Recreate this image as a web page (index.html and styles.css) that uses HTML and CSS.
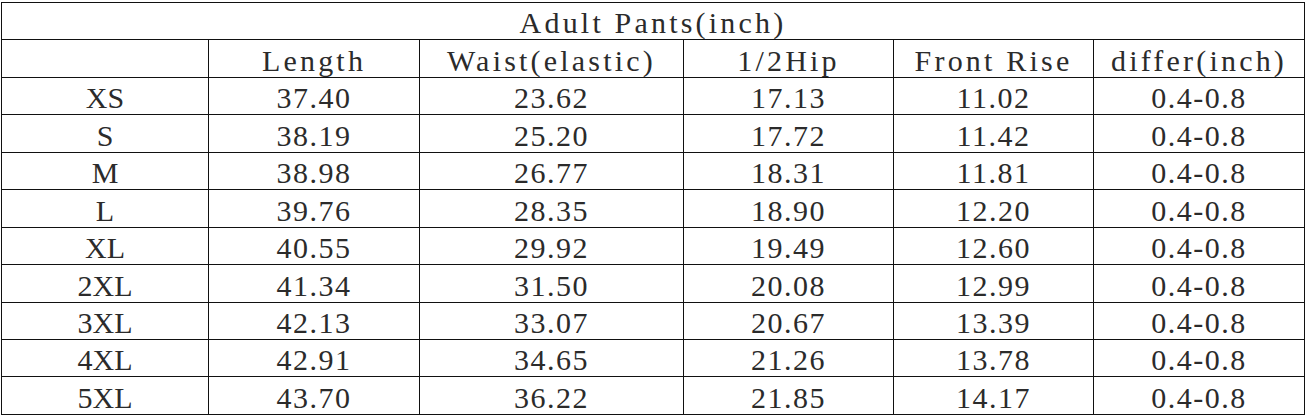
FILE: index.html
```html
<!DOCTYPE html>
<html>
<head>
<meta charset="utf-8">
<link rel="stylesheet" href="styles.css">
</head>
<body>
<table class="sizes">
  <colgroup>
    <col class="c-size"><col class="c-len"><col class="c-waist"><col class="c-hip"><col class="c-rise"><col class="c-diff">
  </colgroup>
  <tr class="head"><td colspan="6">Adult Pants(inch)</td></tr>
  <tr class="head"><td></td><td>Length</td><td>Waist(elastic)</td><td>1/2Hip</td><td>Front Rise</td><td>differ(inch)</td></tr>
  <tr><td>XS</td><td>37.40</td><td>23.62</td><td>17.13</td><td>11.02</td><td>0.4-0.8</td></tr>
  <tr><td>S</td><td>38.19</td><td>25.20</td><td>17.72</td><td>11.42</td><td>0.4-0.8</td></tr>
  <tr><td>M</td><td>38.98</td><td>26.77</td><td>18.31</td><td>11.81</td><td>0.4-0.8</td></tr>
  <tr><td>L</td><td>39.76</td><td>28.35</td><td>18.90</td><td>12.20</td><td>0.4-0.8</td></tr>
  <tr><td>XL</td><td>40.55</td><td>29.92</td><td>19.49</td><td>12.60</td><td>0.4-0.8</td></tr>
  <tr><td>2XL</td><td>41.34</td><td>31.50</td><td>20.08</td><td>12.99</td><td>0.4-0.8</td></tr>
  <tr><td>3XL</td><td>42.13</td><td>33.07</td><td>20.67</td><td>13.39</td><td>0.4-0.8</td></tr>
  <tr><td>4XL</td><td>42.91</td><td>34.65</td><td>21.26</td><td>13.78</td><td>0.4-0.8</td></tr>
  <tr><td>5XL</td><td>43.70</td><td>36.22</td><td>21.85</td><td>14.17</td><td>0.4-0.8</td></tr>
</table>
</body>
</html>
```
FILE: styles.css
```css
html, body {
  margin: 0;
  padding: 0;
  background: #fff;
}
.sizes {
  margin: 2px 0 0 1px;
  border-collapse: collapse;
  table-layout: fixed;
  width: 1303px;
}
.c-size { width: 207px; }
.c-len { width: 211px; }
.c-waist { width: 264px; }
.c-hip { width: 210px; }
.c-rise { width: 200px; }
.c-diff { width: 211px; }
.sizes tr { height: 37.45px; }
.sizes td {
  border: 1px solid #111;
  padding: 0 0 1px;
  text-align: center;
  vertical-align: bottom;
  font-family: "Liberation Serif", "Times New Roman", serif;
  font-size: 30px;
  line-height: 30px;
  letter-spacing: 1.5px;
  color: #2b2b2b;
  white-space: nowrap;
}
.sizes td:first-child {
  letter-spacing: 0;
}
.sizes .head td {
  letter-spacing: 3.2px;
}
```
